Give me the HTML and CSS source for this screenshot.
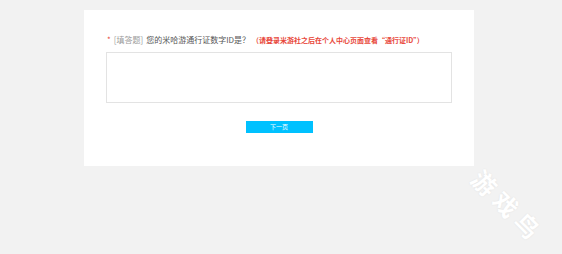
FILE: index.html
```html
<!doctype html>
<html lang="zh-CN">
    <head>
        <meta charset="UTF-8" />
        <meta name="viewport" content="width=device-width, initial-scale=1.0" />
        <title>问卷</title>
        <link rel="stylesheet" href="styles.css">
    </head>
    <body>
        <div class="survey">
            <div class="question">
                <span class="required">*</span>
                <span class="type">[填答题]</span>
                <span class="title">您的米哈游通行证数字ID是？</span>
                <span class="hint">（请登录米游社之后在个人中心页面查看“通行证ID”）</span>
            </div>
            <textarea class="answer"></textarea>
            <div class="actions">
                <button class="btn">下一页</button>
            </div>
        </div>
        <div class="watermark">游戏鸟</div>
    </body>
</html>
```

FILE: styles.css
```css
body {
    font-family: "Noto Sans CJK SC", "Liberation Sans", sans-serif;
    background-color: #f2f2f2;
    margin: 0;
    height: 254px;
    overflow: hidden;
}
.survey {
    background: #fff;
    width: 346px;
    margin: 10px 0 0 84px;
    padding: 25px 22px 33px;
}
.question {
    font-size: 8px;
    line-height: 10px;
    height: 10px;
    display: flex;
    align-items: center;
    white-space: nowrap;
}
.required {
    color: #e8483b;
    margin: 0 3px 0 1px;
}
.type {
    color: #9a9a9a;
    margin-right: 3px;
}
.title {
    color: #555;
    margin-right: 2px;
}
.hint {
    color: #e8483b;
    font-weight: 700;
    font-size: 7px;
}
.answer {
    display: block;
    box-sizing: border-box;
    width: 346px;
    height: 51px;
    margin: 7px 0 0;
    border: 1px solid #e3e3e3;
    resize: none;
    outline: none;
}
.actions {
    display: flex;
    justify-content: center;
    margin-top: 18px;
}
.btn {
    background-color: #00c1ff;
    color: #fff;
    border: none;
    width: 67px;
    height: 12px;
    padding: 0;
    font-family: inherit;
    font-size: 6px;
    line-height: 12px;
    cursor: pointer;
}
.watermark {
    position: absolute;
    left: 458px;
    top: 192px;
    width: 90px;
    padding-left: 6px;
    font-size: 24px;
    line-height: 24px;
    font-weight: 700;
    letter-spacing: 6px;
    color: #fff;
    text-shadow: 0 0 2px rgba(0, 0, 0, 0.08);
    transform: rotate(45deg);
}
```
